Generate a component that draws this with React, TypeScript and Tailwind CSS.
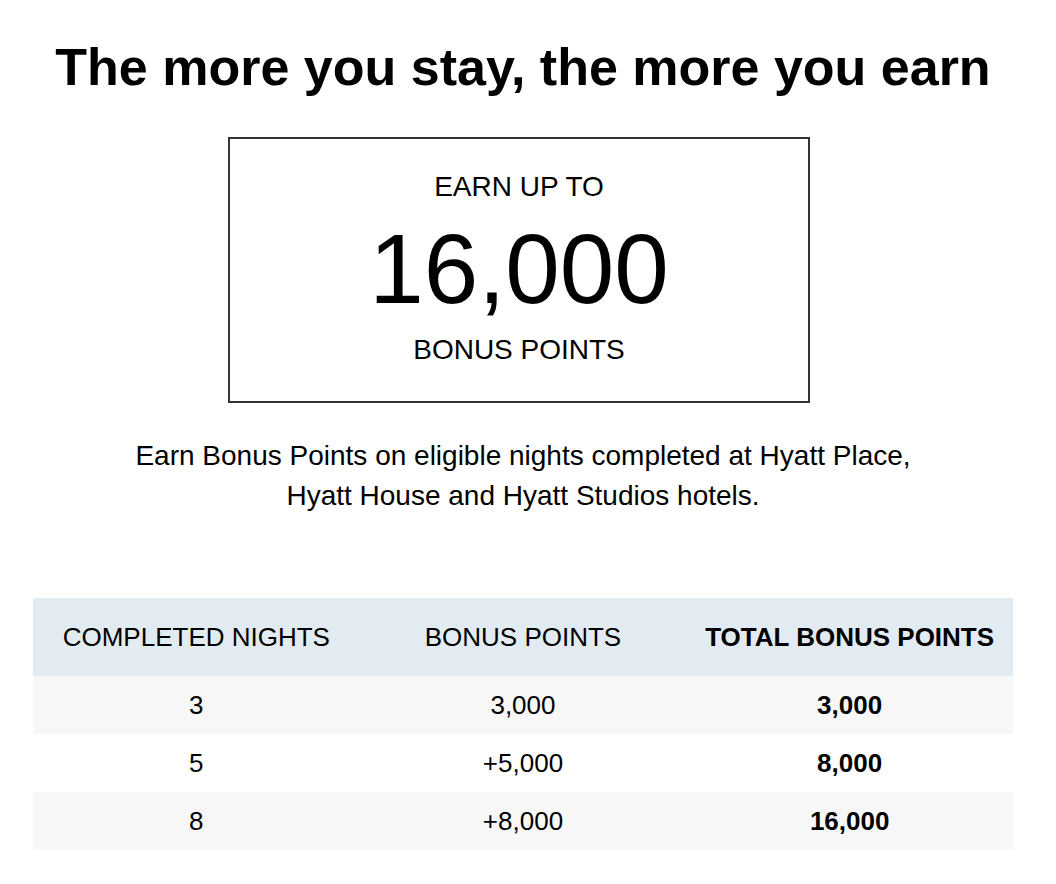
const rows = [
  { nights: "3", bonus: "3,000", total: "3,000", shade: true },
  { nights: "5", bonus: "+5,000", total: "8,000", shade: false },
  { nights: "8", bonus: "+8,000", total: "16,000", shade: true },
];

export default function App() {
  return (
    <div className="min-h-[884px] bg-white font-['Liberation_Sans',Arial,sans-serif] text-black">
      <div className="ml-[33px] w-[980px] flex flex-col items-center pt-[37px]">
        {/* heading */}
        <h1 className="text-[52px] font-bold leading-[60px] tracking-normal">
          The more you stay, the more you earn
        </h1>

        {/* earn up to box */}
        <div className="mt-[40px] self-start ml-[195px] w-[582px] h-[266px] border-2 border-[#333] flex flex-col items-center pt-[34px]">
          <div className="text-[28px] leading-[28px]">EARN UP TO</div>
          <div className="mt-[18px] text-[98px] leading-[100px]">16,000</div>
          <div className="mt-[17px] text-[28px] leading-[28px]">BONUS POINTS</div>
        </div>

        <p className="mt-[33px] text-center text-[28px] leading-[40px]">
          Earn Bonus Points on eligible nights completed at Hyatt Place,
          <br />
          Hyatt House and Hyatt Studios hotels.
        </p>

        {/* table */}
        <table className="mt-[82px] w-full table-fixed border-collapse text-[26px]">
          <thead>
            <tr className="bg-[#e1ebf1] h-[78px]">
              <th className="font-normal">COMPLETED NIGHTS</th>
              <th className="font-normal">BONUS POINTS</th>
              <th className="font-bold">TOTAL BONUS POINTS</th>
            </tr>
          </thead>
          <tbody>
            {rows.map((r) => (
              <tr key={r.nights} className={r.shade ? "bg-[#f7f7f7] h-[58px]" : "bg-white h-[58px]"}>
                <td className="text-center">{r.nights}</td>
                <td className="text-center">{r.bonus}</td>
                <td className="text-center font-bold">{r.total}</td>
              </tr>
            ))}
          </tbody>
        </table>
      </div>
    </div>
  );
}
